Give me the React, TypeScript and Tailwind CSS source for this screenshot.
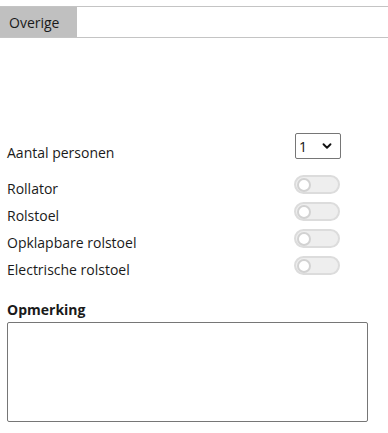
import { ChevronDown } from "lucide-react"

const options = ["Rollator", "Rolstoel", "Opklapbare rolstoel", "Electrische rolstoel"]

function Toggle() {
  return (
    <div className="w-[46px] h-[19px] rounded-full bg-[#eeeeee] border-2 border-[#dcdcdc] flex items-center px-[1px]">
      <span className="w-[14px] h-[14px] rounded-full bg-white border-2 border-[#d2d2d2]" />
    </div>
  )
}

export default function App() {
  return (
    <div className="w-[388px] h-[433px] bg-white text-[#1a1a1a] font-['Open_Sans',sans-serif] text-[14px]">
      <div className="pt-[6px]">
        <div className="border-t border-b border-[#c4c4c4] flex">
          <div className="w-[77px] h-[30px] bg-[#c0c0c0] flex items-center pl-[9px]">Overige</div>
        </div>
      </div>

      <div className="pl-[7px] pt-[95px]">
        <div className="flex items-center h-[26px]">
          <span className="w-[288px] pt-[12px]">Aantal personen</span>
          <div className="w-[46px] h-[26px] border border-[#767676] rounded-[2px] flex items-center justify-between pl-[3px] pr-[6px] text-[#111]">
            <span>1</span>
            <ChevronDown className="w-[14px] h-[14px]" strokeWidth={3.2} />
          </div>
        </div>

        <div className="mt-[16px] flex flex-col gap-[8px]">
          {options.map((o) => (
            <div key={o} className="flex items-center h-[19px]">
              <span className="w-[287px] pt-[8px]">{o}</span>
              <Toggle />
            </div>
          ))}
        </div>

        <div className="mt-[24px] font-bold">Opmerking</div>
        <textarea className="mt-[2px] w-[361px] h-[100px] border border-[#767676] rounded-[2px] block resize-none" />
      </div>
    </div>
  )
}
